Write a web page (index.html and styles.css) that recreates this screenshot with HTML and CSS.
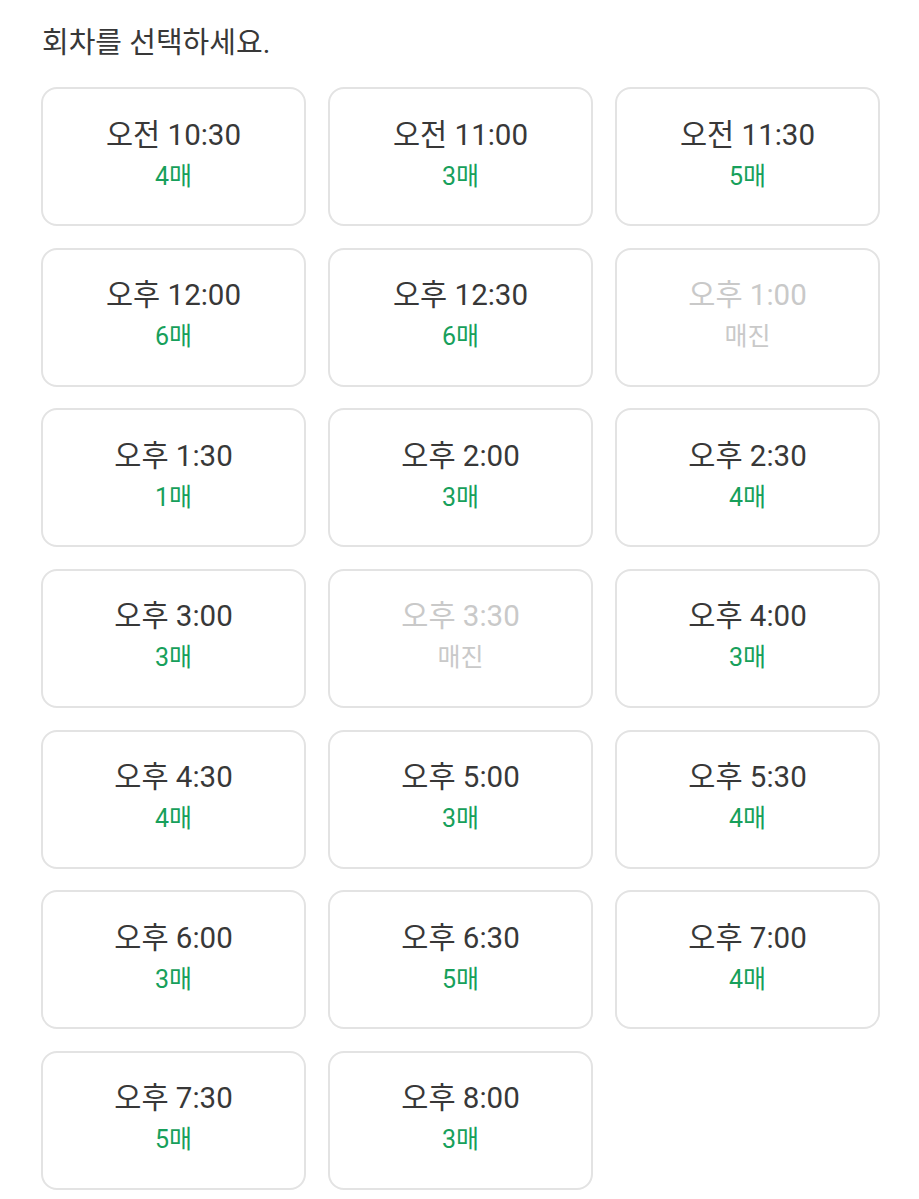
FILE: index.html
```html
<!DOCTYPE html>
<html lang="ko">
<head>
    <meta charset="utf-8">
    <title>회차 선택</title>
    <meta name="viewport" content="width=device-width, initial-scale=1">
    <link rel="stylesheet" href="styles.css">
</head>
<body>
    <div class="container">
        <h2 class="title">회차를 선택하세요.</h2>

        <div class="round-list">
            <div class="round"><div class="time">오전 10:30</div><div class="count">4매</div></div>
            <div class="round"><div class="time">오전 11:00</div><div class="count">3매</div></div>
            <div class="round"><div class="time">오전 11:30</div><div class="count">5매</div></div>

            <div class="round"><div class="time">오후 12:00</div><div class="count">6매</div></div>
            <div class="round"><div class="time">오후 12:30</div><div class="count">6매</div></div>
            <div class="round sold-out"><div class="time">오후 1:00</div><div class="count">매진</div></div>

            <div class="round"><div class="time">오후 1:30</div><div class="count">1매</div></div>
            <div class="round"><div class="time">오후 2:00</div><div class="count">3매</div></div>
            <div class="round"><div class="time">오후 2:30</div><div class="count">4매</div></div>

            <div class="round"><div class="time">오후 3:00</div><div class="count">3매</div></div>
            <div class="round sold-out"><div class="time">오후 3:30</div><div class="count">매진</div></div>
            <div class="round"><div class="time">오후 4:00</div><div class="count">3매</div></div>

            <div class="round"><div class="time">오후 4:30</div><div class="count">4매</div></div>
            <div class="round"><div class="time">오후 5:00</div><div class="count">3매</div></div>
            <div class="round"><div class="time">오후 5:30</div><div class="count">4매</div></div>

            <div class="round"><div class="time">오후 6:00</div><div class="count">3매</div></div>
            <div class="round"><div class="time">오후 6:30</div><div class="count">5매</div></div>
            <div class="round"><div class="time">오후 7:00</div><div class="count">4매</div></div>

            <div class="round"><div class="time">오후 7:30</div><div class="count">5매</div></div>
            <div class="round"><div class="time">오후 8:00</div><div class="count">3매</div></div>
        </div>
    </div>
</body>
</html>
```

FILE: styles.css
```css
body {
    font-family: Roboto, "Noto Sans CJK KR", sans-serif;
    margin: 0;
    background-color: #fff;
    color: #383838;
}
.container {
    padding: 23px 39px 0 41px;
}
.title {
    margin: 0 0 24px 1px;
    font-size: 29px;
    font-weight: 400;
    line-height: 40px;
    color: #383838;
}
.round-list {
    display: grid;
    grid-template-columns: repeat(3, 1fr);
    column-gap: 22px;
    row-gap: 21.67px;
}
.round {
    height: 139px;
    box-sizing: border-box;
    border: 2px solid #e3e3e3;
    border-radius: 16px;
    display: flex;
    flex-direction: column;
    justify-content: center;
    align-items: center;
    text-align: center;
}
.time {
    font-size: 29.5px;
    line-height: 39px;
    color: #383838;
}
.count {
    font-size: 25px;
    line-height: 43px;
    color: #17a05b;
}
.sold-out .time,
.sold-out .count {
    color: #c9c9c9;
}
```
